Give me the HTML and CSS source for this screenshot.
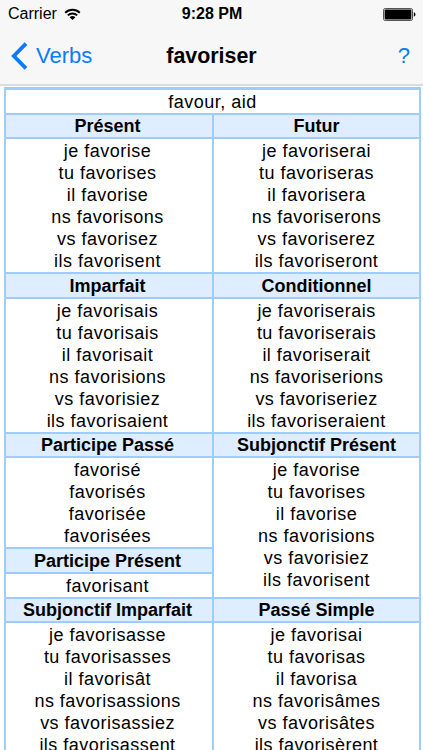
FILE: index.html
```html
<!DOCTYPE html>
<html lang="fr">
<head>
    <meta charset="UTF-8">
    <meta name="viewport" content="width=device-width, initial-scale=1.0">
    <title>favoriser</title>
    <link rel="stylesheet" href="styles.css">
</head>
<body>
    <header class="top">
        <div class="status-bar">
            <div class="carrier">
                <span>Carrier</span>
                <svg class="wifi" width="17" height="13" viewBox="0 0 17 13">
                    <path d="M1.2 4.7C5.3 .8 11.7 .8 15.8 4.7M3.8 7.4C6.5 4.9 10.5 4.9 13.2 7.4" fill="none" stroke="#000" stroke-width="1.9"/>
                    <path d="M5.6 9.2C7.3 7.7 9.7 7.7 11.4 9.2L8.5 12.1Z"/>
                </svg>
            </div>
            <div class="time">9:28 PM</div>
            <svg class="battery" width="33" height="13" viewBox="0 0 33 13">
                <rect x=".5" y=".5" width="29" height="12" rx="1.7" fill="none" stroke="#555"/>
                <rect x="1.6" y="1.6" width="26.8" height="9.8" rx=".8"/>
                <path d="M30.8 4.3C33 5 33 8 30.8 8.7Z"/>
            </svg>
        </div>
        <nav class="nav-bar">
            <a class="back">
                <svg width="17" height="28" viewBox="0 0 17 28">
                    <path d="M15 1.6L2.8 14L15 26.4" fill="none" stroke="#0a7bfa" stroke-width="3.8"/>
                </svg>
                <span>Verbs</span>
            </a>
            <h1>favoriser</h1>
            <a class="help">?</a>
        </nav>
    </header>

    <main class="verb">
        <div class="meaning">favour, aid</div>
        <div class="columns">
            <!-- Colonne gauche -->
            <div class="column left">
                <h2>Présent</h2>
                <ul class="forms">
                    <li>je favorise</li>
                    <li>tu favorises</li>
                    <li>il favorise</li>
                    <li>ns favorisons</li>
                    <li>vs favorisez</li>
                    <li>ils favorisent</li>
                </ul>
                <h2>Imparfait</h2>
                <ul class="forms">
                    <li>je favorisais</li>
                    <li>tu favorisais</li>
                    <li>il favorisait</li>
                    <li>ns favorisions</li>
                    <li>vs favorisiez</li>
                    <li>ils favorisaient</li>
                </ul>
                <h2>Participe Passé</h2>
                <ul class="forms">
                    <li>favorisé</li>
                    <li>favorisés</li>
                    <li>favorisée</li>
                    <li>favorisées</li>
                </ul>
                <h2>Participe Présent</h2>
                <ul class="forms">
                    <li>favorisant</li>
                </ul>
                <h2>Subjonctif Imparfait</h2>
                <ul class="forms">
                    <li>je favorisasse</li>
                    <li>tu favorisasses</li>
                    <li>il favorisât</li>
                    <li>ns favorisassions</li>
                    <li>vs favorisassiez</li>
                    <li>ils favorisassent</li>
                </ul>
            </div>

            <!-- Colonne droite -->
            <div class="column">
                <h2>Futur</h2>
                <ul class="forms">
                    <li>je favoriserai</li>
                    <li>tu favoriseras</li>
                    <li>il favorisera</li>
                    <li>ns favoriserons</li>
                    <li>vs favoriserez</li>
                    <li>ils favoriseront</li>
                </ul>
                <h2>Conditionnel</h2>
                <ul class="forms">
                    <li>je favoriserais</li>
                    <li>tu favoriserais</li>
                    <li>il favoriserait</li>
                    <li>ns favoriserions</li>
                    <li>vs favoriseriez</li>
                    <li>ils favoriseraient</li>
                </ul>
                <h2>Subjonctif Présent</h2>
                <ul class="forms fill">
                    <li>je favorise</li>
                    <li>tu favorises</li>
                    <li>il favorise</li>
                    <li>ns favorisions</li>
                    <li>vs favorisiez</li>
                    <li>ils favorisent</li>
                </ul>
                <h2>Passé Simple</h2>
                <ul class="forms">
                    <li>je favorisai</li>
                    <li>tu favorisas</li>
                    <li>il favorisa</li>
                    <li>ns favorisâmes</li>
                    <li>vs favorisâtes</li>
                    <li>ils favorisèrent</li>
                </ul>
            </div>
        </div>
    </main>
</body>
</html>
```

FILE: styles.css
```css
* {
    box-sizing: border-box;
}
body {
    margin: 0;
    height: 750px;
    overflow: hidden;
    background-color: #fff;
    color: #000;
    font-family: "Liberation Sans", Arial, sans-serif;
}
.top {
    height: 86px;
    background-color: #f7f7f7;
    border-bottom: 2px solid #dcdcdd;
}

/* Barre d'état */
.status-bar {
    display: grid;
    grid-template-columns: 1fr auto 1fr;
    align-items: center;
    height: 28px;
    padding: 0 7px 0 8px;
    font-size: 16px;
}
.carrier {
    display: flex;
    align-items: center;
    gap: 7px;
}
.time {
    font-weight: bold;
}
.battery {
    justify-self: end;
}

/* Navigation */
.nav-bar {
    display: grid;
    grid-template-columns: 1fr auto 1fr;
    align-items: center;
    height: 56px;
    padding: 0 13px 0 11px;
    font-size: 22px;
}
.nav-bar h1 {
    margin: 0;
    padding-left: 2px;
    font-size: 21.4px;
}
.back,
.help {
    color: #0a7bfa;
}
.back {
    display: flex;
    align-items: center;
    gap: 8px;
}
.help {
    justify-self: end;
}

/* Tableau de conjugaison : les filets sont le fond visible entre les cellules */
.verb {
    margin: 1px 2px 0 4px;
    padding: 2.75px 2px 2px;
    background-color: #9dccff;
    font-size: 18px;
    line-height: 22px;
    text-align: center;
    letter-spacing: 0.48px;
}
.meaning {
    margin-bottom: 2px;
    padding-top: 0.75px;
    background-color: #fff;
}
.columns {
    display: grid;
    grid-template-columns: 206px 1fr;
    gap: 2px;
}
.column {
    display: flex;
    flex-direction: column;
    gap: 2px;
}
.column h2 {
    margin: 0;
    padding-top: 0.75px;
    background-color: #deedff;
    font-size: 18px;
    letter-spacing: 0;
}
.forms {
    margin: 0;
    padding: 0.75px 0 0;
    list-style: none;
    background-color: #fff;
}
.left h2,
.left .forms {
    padding-right: 3px;
}
.fill {
    height: 138.25px;
}
```
